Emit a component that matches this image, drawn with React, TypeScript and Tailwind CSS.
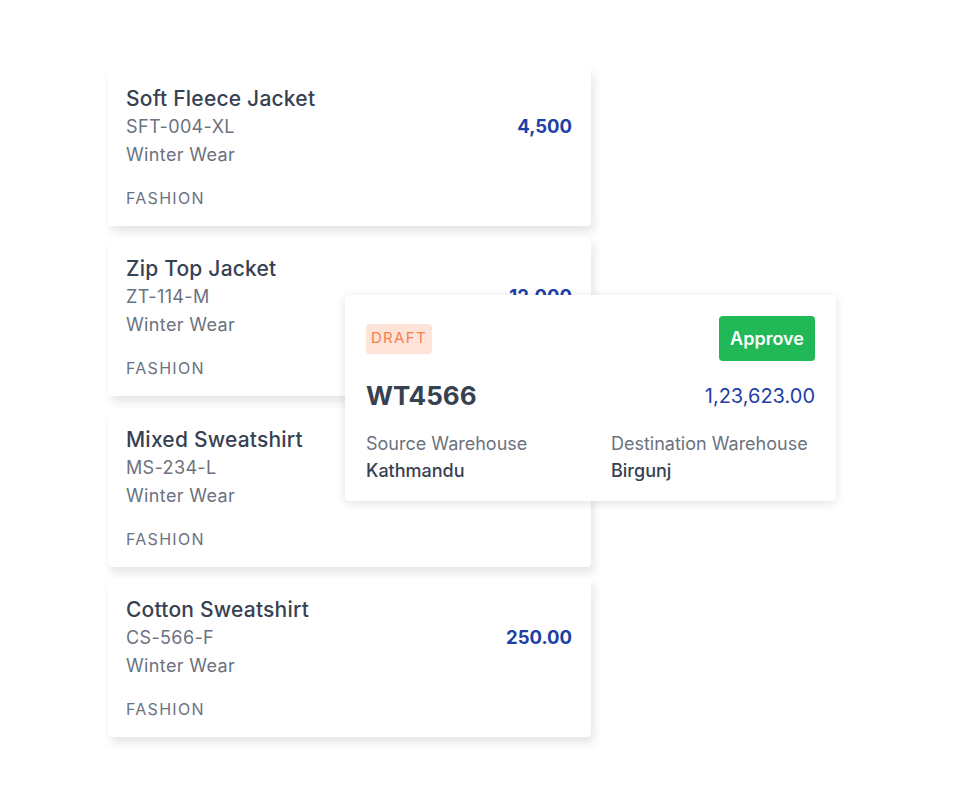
import React from 'react'

type Product = {
    name: string
    sku: string
    group: string
    category: string
    price: string
}

const products: Product[] = [
    { name: 'Soft Fleece Jacket', sku: 'SFT-004-XL', group: 'Winter Wear', category: 'Fashion', price: '4,500' },
    { name: 'Zip Top Jacket', sku: 'ZT-114-M', group: 'Winter Wear', category: 'Fashion', price: '12,000' },
    { name: 'Mixed Sweatshirt', sku: 'MS-234-L', group: 'Winter Wear', category: 'Fashion', price: '800.00' },
    { name: 'Cotton Sweatshirt', sku: 'CS-566-F', group: 'Winter Wear', category: 'Fashion', price: '250.00' },
]

function ProductCard({ item }: { item: Product }) {
    return (
        <div className="flex h-[159px] items-start justify-between rounded-[4px] bg-white pl-[18px] pr-[19px] pt-[18px] shadow-[3px_6px_10px_rgba(0,0,0,0.1)]">
            <div className="flex flex-col">
                <div className="text-[21px] leading-[28px] font-medium tracking-[0.01em] text-[#374151]">{item.name}</div>
                <div className="text-[18px] leading-[28px] tracking-[0.02em] text-[#6b7280]">{item.sku}</div>
                <div className="text-[18px] leading-[28px] tracking-[0.02em] text-[#6b7280]">{item.group}</div>
                <div className="mt-[17px] text-[16px] leading-[24px] uppercase tracking-[0.08em] text-[#6b7280]">
                    {item.category}
                </div>
            </div>
            <div className="mt-[27px] text-[18.5px] leading-[28px] font-bold text-[#1e3fa6]">{item.price}</div>
        </div>
    )
}

function TransferCard() {
    return (
        <div className="absolute left-[237px] top-[228px] w-[491px] rounded-[4px] bg-white px-[21px] pb-[17px] pt-[21px] shadow-[0_2px_10px_rgba(0,0,0,0.12)]">
            <div className="flex items-center justify-between">
                <span className="flex h-[30px] w-[66px] items-center justify-center rounded-[4px] bg-[#fee4d8] text-[15px] tracking-[0.09em] text-[#f97d4f]">
                    DRAFT
                </span>
                <button className="h-[45px] w-[96px] rounded-[4px] bg-[#21b857] text-[18px] font-semibold text-white">
                    Approve
                </button>
            </div>
            <div className="mt-[18px] flex items-center justify-between">
                <span className="text-[26px] leading-[34px] font-bold text-[#374151]">WT4566</span>
                <span className="text-[20px] leading-[28px] text-[#1e3fa6]">1,23,623.00</span>
            </div>
            <div className="mt-[17px] grid grid-cols-[245px_1fr]">
                <div>
                    <div className="text-[18px] leading-[27px] text-[#6b7280]">Source Warehouse</div>
                    <div className="text-[18px] leading-[27px] font-medium text-[#374151]">Kathmandu</div>
                </div>
                <div>
                    <div className="text-[18px] leading-[27px] text-[#6b7280]">Destination Warehouse</div>
                    <div className="text-[18px] leading-[27px] font-medium text-[#374151]">Birgunj</div>
                </div>
            </div>
        </div>
    )
}

export default function App() {
    return (
        <div className="min-h-[811px] w-[980px] bg-white pl-[108px] pt-[67px]" style={{ fontFamily: 'Inter, "Noto Sans", sans-serif' }}>
            <div className="relative flex w-[483px] flex-col gap-[11.3px]">
                {products.map((p) => (
                    <ProductCard key={p.sku} item={p} />
                ))}
                <TransferCard />
            </div>
        </div>
    )
}
